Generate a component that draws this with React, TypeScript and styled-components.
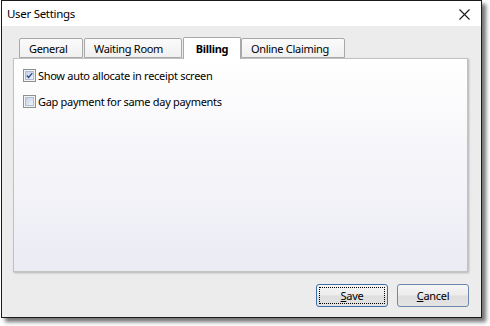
import React from "react";
import styled, { createGlobalStyle } from "styled-components";

const Global = createGlobalStyle`
  html, body { margin: 0; padding: 0; background: #ffffff; }
  body { font-family: "Noto Sans", "Open Sans", sans-serif; font-size: 11px; letter-spacing: -0.3px; color: #000; }
  * { box-sizing: border-box; }
`;

const Page = styled.div`
  padding-left: 1px;
  width: 490px;
  height: 326px;
`;

const Window = styled.div`
  width: 481px;
  height: 318px;
  border: 1px solid #1b1b1b;
  background: #ececec;
  box-shadow: 4px 4px 4px rgba(0, 0, 0, 0.55);
  display: flex;
  flex-direction: column;
`;

const TitleBar = styled.div`
  height: 25px;
  background: #ffffff;
  display: flex;
  align-items: center;
  justify-content: space-between;
  padding: 0 11px 0 5px;
  flex-shrink: 0;
`;

const Title = styled.span`
  font-size: 11.5px;
  line-height: 16px;
`;

const CloseIcon = styled.svg`
  width: 11px;
  height: 11px;
  margin-top: 1px;
`;

const Body = styled.div`
  flex: 1;
  display: flex;
  flex-direction: column;
  padding: 11px 12px 0 11px;
`;

const TabRow = styled.div`
  display: flex;
  align-items: flex-end;
  padding-left: 6px;
  height: 21px;
  position: relative;
  z-index: 1;
`;

const Tab = styled.div<{ $w: number; $active?: boolean }>`
  width: ${(p) => p.$w}px;
  height: ${(p) => (p.$active ? 22 : 20)}px;
  margin-right: ${(p) => (p.$active ? 0 : 1)}px;
  margin-bottom: ${(p) => (p.$active ? -1 : 0)}px;
  border: 1px solid #a8a8a8;
  border-bottom: ${(p) => (p.$active ? "none" : "1px solid #a8a8a8")};
  border-radius: 2px 2px 0 0;
  background: ${(p) =>
    p.$active ? "#ffffff" : "linear-gradient(#fbfbfb, #f0f0f0)"};
  font-weight: ${(p) => (p.$active ? 700 : 400)};
  display: flex;
  justify-content: ${(p) => (p.$active ? "center" : "flex-start")};
  align-items: center;
  padding-left: ${(p) => (p.$active ? 0 : 9)}px;
  padding-top: ${(p) => (p.$active ? 0 : 1)}px;
  line-height: 16px;
  white-space: nowrap;
`;

const Panel = styled.div`
  width: 455px;
  height: 214px;
  border: 1px solid #c2c2c2;
  background: linear-gradient(#ffffff, #ebebf4);
  box-shadow: 1px 1px 2px rgba(0, 0, 0, 0.25);
  padding: 10px 0 0 9px;
  display: flex;
  flex-direction: column;
  gap: 13px;
`;

const CheckRow = styled.label`
  display: flex;
  align-items: center;
  height: 13px;
  gap: 2px;
  line-height: 16px;
  white-space: nowrap;
`;

const Box = styled.span`
  width: 13px;
  height: 13px;
  border: 1px solid #8e8f8f;
  background: #f4f4f4;
  display: flex;
  align-items: center;
  justify-content: center;
  padding: 1px;
  flex-shrink: 0;
`;

const BoxInner = styled.span`
  width: 9px;
  height: 9px;
  border: 1px solid #aebdd6;
  background: linear-gradient(135deg, #c3d1e8, #f0f4fa);
  display: flex;
  align-items: center;
  justify-content: center;
`;

const ButtonRow = styled.div`
  display: flex;
  justify-content: flex-end;
  gap: 9px;
  margin-top: 12px;
`;

const Button = styled.button<{ $focus?: boolean }>`
  width: 72px;
  height: 23px;
  border: 1px solid ${(p) => (p.$focus ? "#3c6fa8" : "#6d87ad")};
  border-radius: 3px;
  background: linear-gradient(#f6f6f6 0%, #ececec 48%, #dedede 52%, #e3e3e3 100%);
  font-family: "Noto Sans", "Open Sans", sans-serif;
  font-size: 11px;
  letter-spacing: -0.3px;
  color: #000;
  padding: 2px;
  display: flex;
  cursor: default;
`;

const Focus = styled.span<{ $on?: boolean }>`
  flex: 1;
  border: 1px dotted ${(p) => (p.$on ? "#000" : "transparent")};
  display: flex;
  align-items: center;
  justify-content: center;
  line-height: 16px;
`;

const U = styled.span`
  text-decoration: underline;
`;

const Check = () => (
  <svg width="9" height="9" viewBox="0 0 9 9">
    <path d="M1 4.5 L3.4 7 L8 1.5" fill="none" stroke="#2f4f94" strokeWidth="1.8" />
  </svg>
);

export default function App() {
  return (
    <Page>
      <Global />
      <Window>
        <TitleBar>
          <Title>User Settings</Title>
          <CloseIcon viewBox="0 0 11 11">
            <path d="M0.5 0.5 L10.5 10.5 M10.5 0.5 L0.5 10.5" stroke="#1a1a1a" strokeWidth="1.1" />
          </CloseIcon>
        </TitleBar>
        <Body>
          <TabRow>
            <Tab $w={64}>General</Tab>
            <Tab $w={98}>Waiting Room</Tab>
            <Tab $w={58} $active>Billing</Tab>
            <Tab $w={104}>Online Claiming</Tab>
          </TabRow>
          <Panel>
            <CheckRow>
              <Box>
                <BoxInner>
                  <Check />
                </BoxInner>
              </Box>
              Show auto allocate in receipt screen
            </CheckRow>
            <CheckRow>
              <Box>
                <BoxInner />
              </Box>
              Gap payment for same day payments
            </CheckRow>
          </Panel>
          <ButtonRow>
            <Button $focus>
              <Focus $on>
                <U>S</U>ave
              </Focus>
            </Button>
            <Button>
              <Focus>
                <U>C</U>ancel
              </Focus>
            </Button>
          </ButtonRow>
        </Body>
      </Window>
    </Page>
  );
}
